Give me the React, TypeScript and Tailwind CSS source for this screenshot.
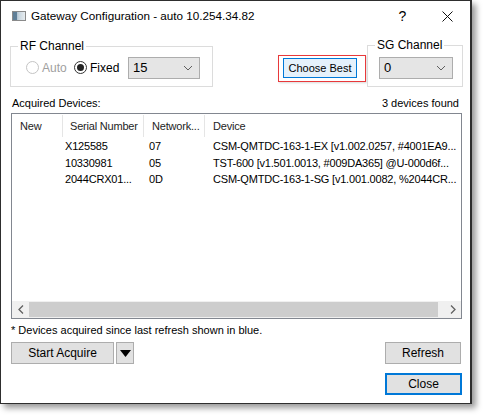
import React from 'react';

const font = { fontFamily: '"Liberation Sans", Arial, sans-serif' };

interface Device {
  serial: string;
  network: string;
  device: string;
}

const devices: Device[] = [
  { serial: 'X125585', network: '07', device: 'CSM-QMTDC-163-1-EX [v1.002.0257, #4001EA9...' },
  { serial: '10330981', network: '05', device: 'TST-600 [v1.501.0013, #009DA365] @U-000d6f...' },
  { serial: '2044CRX01...', network: '0D', device: 'CSM-QMTDC-163-1-SG [v1.001.0082, %2044CR...' },
];

function Chevron() {
  return (
    <svg width="10" height="6" viewBox="0 0 10 6" className="text-[#606060]">
      <path d="M1 1 L5 5 L9 1" fill="none" stroke="currentColor" strokeWidth="1" />
    </svg>
  );
}

function Combo({ value, width }: { value: string; width: string }) {
  return (
    <div className={`${width} h-[22px] bg-[#e5e5e5] border border-[#adadad] flex items-center justify-between pl-[4px] pr-[6px] text-[13px] text-black`}>
      <span>{value}</span>
      <Chevron />
    </div>
  );
}

export default function App() {
  return (
    <div className="w-[486px] h-[420px] bg-white" style={font}>
      <div className="w-[472px] h-[404px] border border-[#2e2e2e] border-r-2 bg-white shadow-[4px_4px_6px_rgba(0,0,0,0.4)] flex flex-col">
        {/* title bar */}
        <div className="h-[30px] flex items-center pl-[11px] shrink-0">
          <div className="w-[14px] h-[10px] border border-[#8a8a8a] bg-gradient-to-r from-[#7d9cb5] via-[#c9d6df] to-[#e7ecef] flex">
            <div className="w-[4px] h-full bg-[#5f7f97]" />
          </div>
          <span className="ml-[5px] text-[11.7px] text-black">Gateway Configuration - auto 10.254.34.82</span>
          <div className="flex-1" />
          <div className="w-[45px] text-center text-[14px] text-black">?</div>
          <div className="w-[45px] flex justify-center">
            <svg width="11" height="11" viewBox="0 0 11 11">
              <path d="M0.5 0.5 L10.5 10.5 M10.5 0.5 L0.5 10.5" stroke="#111" strokeWidth="1" />
            </svg>
          </div>
        </div>

        {/* channel controls */}
        <div className="h-[64px] flex items-start pl-[9px] shrink-0">
          <div className="relative mt-[15px] w-[203px] h-[41px] border border-[#dcdcdc] flex items-center pl-[15px] pt-[2px]">
            <span className="absolute left-[7px] top-[-9px] bg-white px-[2px] text-[12px] leading-[16px] text-black">RF Channel</span>
            <label className="w-[48px] flex items-center gap-[3px]">
              <span className="w-[13px] h-[13px] rounded-full border border-[#c4c4c4] bg-white" />
              <span className="text-[12px] text-[#a0a0a0]">Auto</span>
            </label>
            <label className="w-[54px] flex items-center gap-[3px]">
              <span className="w-[13px] h-[13px] rounded-full border border-[#333] bg-white flex items-center justify-center">
                <span className="w-[7px] h-[7px] rounded-full bg-[#222]" />
              </span>
              <span className="text-[12px] text-black">Fixed</span>
            </label>
            <Combo value="15" width="w-[72px]" />
          </div>

          <div className="ml-[65px] mt-[24px] w-[88px] h-[27px] border-[1.5px] border-[#e8393b] shadow-[1px_1px_2px_rgba(0,0,0,0.15)] flex items-center pl-[4px] pb-[1px]">
            <div className="w-[74px] h-[20px] bg-[#e5f1fb] border border-[#0078d7] flex items-center justify-center text-[11px] text-black">
              Choose Best
            </div>
          </div>

          <div className="relative ml-[1px] mt-[14px] w-[96px] h-[42px] border border-[#dcdcdc] flex items-center pl-[11px] pt-[3px]">
            <span className="absolute left-[7px] top-[-9px] bg-white px-[2px] text-[12px] leading-[16px] text-black">SG Channel</span>
            <Combo value="0" width="w-[74px]" />
          </div>
        </div>

        {/* device list */}
        <div className="flex-1 flex flex-col pl-[10px] pr-[8px] text-[11px] text-black">
          <div className="h-[16px] flex items-center justify-between pl-[1px] pr-[3px]">
            <span>Acquired Devices:</span>
            <span>3 devices found</span>
          </div>
          <div className="mt-[2px] h-[206px] border border-[#828790] flex flex-col">
            <div className="h-[24px] flex items-center text-[#1e1e1e] tracking-[-0.2px]">
              <div className="w-[50px] pl-[8px]">New</div>
              <div className="w-[81px] pl-[7px] border-l border-[#e5e5e5] h-[22px] flex items-center">Serial Number</div>
              <div className="w-[61px] pl-[8px] border-l border-[#e5e5e5] h-[22px] flex items-center">Network...</div>
              <div className="flex-1 pl-[8px] border-l border-[#e5e5e5] h-[22px] flex items-center">Device</div>
            </div>
            <div className="flex-1 tracking-[-0.2px]">
              {devices.map((d) => (
                <div key={d.serial} className="h-[16.5px] flex items-center whitespace-nowrap">
                  <div className="w-[50px]" />
                  <div className="w-[81px] pl-[3px]">{d.serial}</div>
                  <div className="w-[61px] pl-[6px]">{d.network}</div>
                  <div className="flex-1 pl-[9px]">{d.device}</div>
                </div>
              ))}
            </div>
            <div className="h-[17px] bg-[#f0f0f0] flex items-center">
              <div className="w-[17px] flex justify-center">
                <svg width="6" height="9" viewBox="0 0 6 9">
                  <path d="M5 0.5 L1 4.5 L5 8.5" fill="none" stroke="#606060" strokeWidth="1.3" />
                </svg>
              </div>
              <div className="flex-1 h-[15px] bg-[#cdcdcd] mr-[6px]" />
              <div className="w-[17px] flex justify-center">
                <svg width="6" height="9" viewBox="0 0 6 9">
                  <path d="M1 0.5 L5 4.5 L1 8.5" fill="none" stroke="#606060" strokeWidth="1.3" />
                </svg>
              </div>
            </div>
          </div>

          <div className="mt-[3px] h-[16px] flex items-center">* Devices acquired since last refresh shown in blue.</div>

          <div className="mt-[4px] flex items-center">
            <button className="w-[103px] h-[22px] bg-[#e1e1e1] border border-[#adadad] text-[12px]">Start Acquire</button>
            <button className="ml-[2px] w-[18px] h-[22px] bg-[#e1e1e1] border border-[#adadad] flex items-center justify-center">
              <svg width="11" height="7" viewBox="0 0 11 7">
                <path d="M0 0 L11 0 L5.5 7 Z" fill="#000" />
              </svg>
            </button>
            <div className="flex-1" />
            <button className="mr-[1px] w-[76px] h-[22px] bg-[#e1e1e1] border border-[#adadad] text-[12px]">Refresh</button>
          </div>

          <div className="mt-[9px] flex justify-end">
            <button className="w-[77px] h-[22px] bg-[#e1e1e1] border-2 border-[#0078d7] text-[12px]">Close</button>
          </div>
        </div>
      </div>
    </div>
  );
}
